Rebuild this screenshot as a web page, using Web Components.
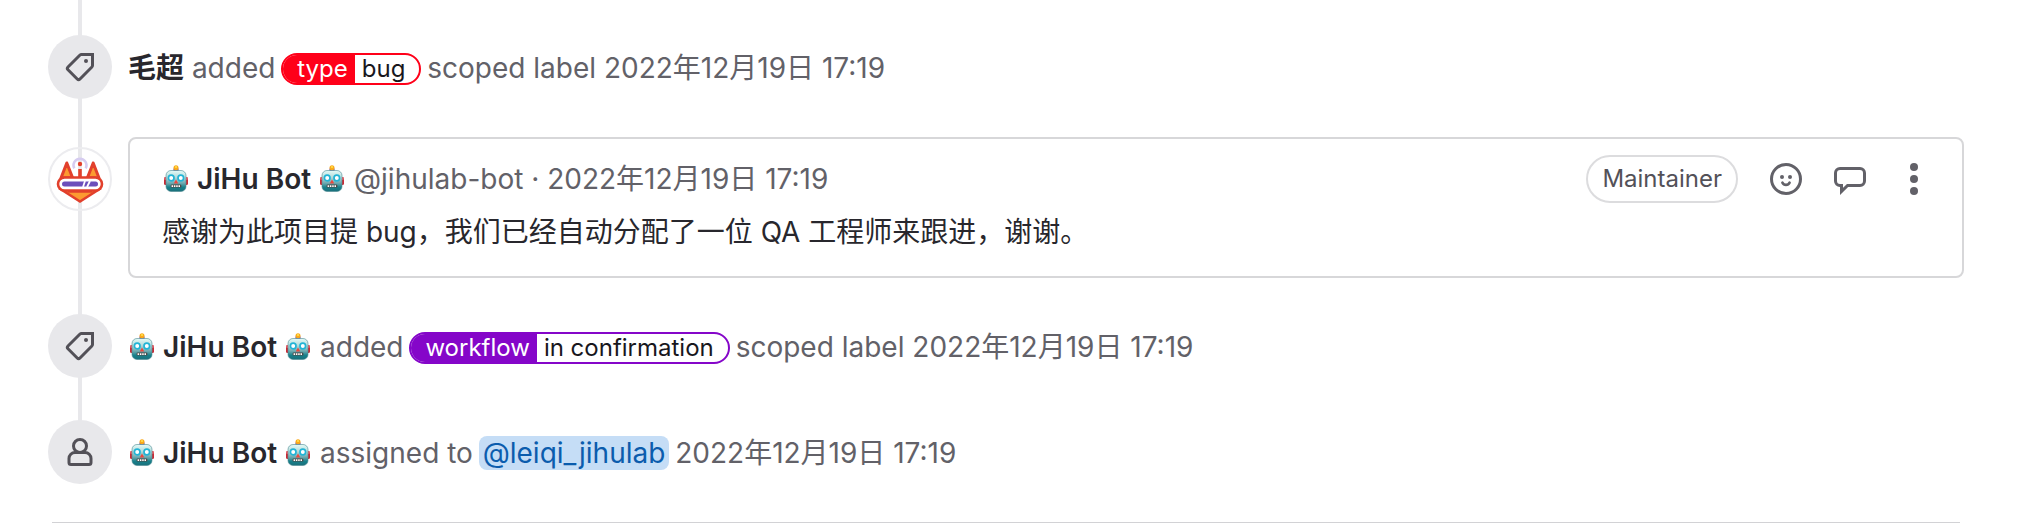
<!DOCTYPE html>
<html lang="en">
<head>
<meta charset="utf-8">
<title>Issue activity</title>
<style>
  body { margin: 0; background: #fff; color: #28272d; font: 28px/40px Inter, "Noto Sans CJK SC", sans-serif; }
</style>
</head>
<body>
<activity-timeline>
  <timeline-entry icon="label">
    <user-name>毛超</user-name> added <scoped-label scope="type" color="#ff0019">bug</scoped-label> scoped label <time-stamp></time-stamp>
  </timeline-entry>
  <timeline-note></timeline-note>
  <timeline-entry icon="label">
    <user-name bot>JiHu Bot</user-name> added <scoped-label scope="workflow" color="#8506c9">in confirmation</scoped-label> scoped label <time-stamp></time-stamp>
  </timeline-entry>
  <timeline-entry icon="user">
    <user-name bot>JiHu Bot</user-name> assigned to <user-mention>@leiqi_jihulab</user-mention> <time-stamp></time-stamp>
  </timeline-entry>
</activity-timeline>
<script>
const define = (name, html, setup) => customElements.define(name, class extends HTMLElement {
  connectedCallback() {
    if (this.shadowRoot) return;
    const root = this.attachShadow({ mode: 'open' });
    root.innerHTML = html;
    if (setup) setup(this, root);
  }
});

define('robot-emoji', `
<style>:host{display:inline-block;width:28px;height:28px;vertical-align:-4px} svg{display:block}</style>
<svg width="28" height="28" viewBox="0 0 28 28" role="img" aria-label="robot">
  <defs>
    <linearGradient id="face" x1="0" y1="0" x2="0" y2="1"><stop offset="0" stop-color="#e4fbf8"/><stop offset=".3" stop-color="#b9dedd"/><stop offset=".6" stop-color="#6fa9af"/><stop offset=".8" stop-color="#17808a"/><stop offset="1" stop-color="#1b6f7a"/></linearGradient>
  </defs>
  <rect x="2" y="12" width="24" height="8" rx="1.5" fill="#c92a35"/>
  <rect x="2" y="12" width="24" height="3" rx="1.5" fill="#e9616a"/>
  <rect x="11.5" y="3" width="5" height="4.5" rx="1" fill="#6b3f88"/>
  <circle cx="14" cy="2.8" r="2.5" fill="#f9a91c"/><circle cx="14" cy="2" r="1.1" fill="#ffe04a"/>
  <rect x="4" y="5.5" width="20" height="21" rx="5" fill="url(#face)" stroke="#4d8a92" stroke-width=".6"/>
  <g fill="#fff" stroke="#22b4d6" stroke-width="1.7"><circle cx="9.2" cy="13" r="2.8"/><circle cx="18.8" cy="13" r="2.8"/></g>
  <path d="M14 14.5l2.2 4h-4.4z" fill="#f0453a"/>
  <rect x="8.6" y="19.6" width="10.8" height="3" rx="1.2" fill="#4f4a48"/>
  <path d="M9.6 21.1h9" stroke="#fff" stroke-width="1.7" stroke-dasharray="1.5 .8"/>
</svg>`);

define('user-name', `
<style>:host{color:#28272d;font-weight:600} a{color:inherit;text-decoration:none}</style>
<a href="#"><slot></slot></a>`, (el, root) => {
  if (el.hasAttribute('bot')) {
    const a = root.querySelector('a');
    a.prepend(document.createElement('robot-emoji'), ' ');
    a.append(' ', document.createElement('robot-emoji'));
  }
});

define('time-stamp', `
<style>a{color:inherit;text-decoration:none}</style>
<a href="#"><time datetime="2022-12-19T17:19">2022年12月19日 17:19</time></a>`);

define('user-mention', `
<style>:host{margin:0 -2px} a{color:#0b5cad;background:#c5ddf6;border-radius:8px;padding:0 4px;text-decoration:none}</style>
<a href="#"><slot></slot></a>`);

define('scoped-label', `
<style>
:host{display:inline-flex;vertical-align:1px;margin:0 -2px}
a{display:flex;box-sizing:border-box;height:32px;border:2px solid var(--c);border-radius:16px;overflow:hidden;font-size:24px;line-height:28px;color:#18171d;text-decoration:none}
.scope{background:var(--c);color:#fff;padding:0 7px 0 14px}
.value{padding:0 14px 0 7px}
</style>
<a href="#"><span class="scope"></span><span class="value"><slot></slot></span></a>`, (el, root) => {
  root.querySelector('.scope').textContent = el.getAttribute('scope');
  el.style.setProperty('--c', el.getAttribute('color'));
});

const icons = {
  label: '<path d="M8.7 1.75h5.55V7.3a1 1 0 0 1-.3.7L8 14a1 1 0 0 1-1.4 0L2 9.4A1 1 0 0 1 2 8l6-6a1 1 0 0 1 .7-.25z"/><circle cx="11" cy="5" r="1" fill="currentColor" stroke="none"/>',
  user: '<circle cx="8" cy="5" r="3.25"/><path d="M5.5 8.25h5a3 3 0 0 1 3 3v2a1 1 0 0 1-1 1h-9a1 1 0 0 1-1-1v-2a3 3 0 0 1 3-3z"/>'
};

define('timeline-entry', `
<style>
:host{display:grid;grid-template-columns:64px 1fr;column-gap:16px;align-items:center;color:#626168}
.badge{display:grid;place-items:center;height:64px;border-radius:50%;background:#e8e8eb;color:#535158}
.text{padding-top:2px}
</style>
<div class="badge"><svg width="32" height="32" viewBox="0 0 16 16" fill="none" stroke="currentColor" stroke-width="1.5" aria-hidden="true"></svg></div>
<div class="text"><slot></slot></div>`, (el, root) => {
  root.querySelector('svg').innerHTML = icons[el.getAttribute('icon')];
});

define('bot-avatar', `
<style>:host{display:block;width:64px;height:64px} svg{display:block}</style>
<svg width="64" height="64" viewBox="0 0 64 64" role="img" aria-label="JiHu Bot avatar">
  <circle cx="32" cy="32" r="31" fill="#fff"/>
  <path d="M30 1h4v62h-4z" fill="#e8e8eb"/>
  <circle cx="32" cy="32" r="31" fill="none" stroke="#ececef" stroke-width="2"/>
  <path d="M26.3 21.3a6.5 6.5 0 1 1 11.4 0" fill="none" stroke="#d6ccf0" stroke-width="2.5"/>
  <path d="M13 31l5.8-15 5.7 14.5zM51 31l-5.8-15-5.7 14.5z" fill="#fc9a30" stroke="#e2402c" stroke-width="3" stroke-linejoin="round"/>
  <circle cx="32" cy="17" r="2.2" fill="#e2402c"/><path d="M30.2 22h3.6v8h-3.6z" fill="#e2402c"/>
  <path d="M14 43h36L32 54.5z" fill="#fc9a30" stroke="#e2402c" stroke-width="2.5"/>
  <path d="M20 44.5h24" stroke="#e2402c" stroke-width="2.5"/>
  <rect x="10" y="30.5" width="44" height="13" rx="6.5" fill="#fff" stroke="#e2402c" stroke-width="2.6"/>
  <rect x="14" y="34.5" width="36" height="5" rx="2.5" fill="#6b4fbb"/>
  <path d="M37 34l-2 6M42 34l-3 6" stroke="#fff" stroke-width="1.8"/>
</svg>`);

define('icon-button', `
<style>
:host{display:block}
button{display:grid;place-items:center;width:64px;height:48px;margin:0;padding:0;border:0;background:none;color:#626168}
</style>
<button type="button"><slot></slot></button>`, (el, root) => {
  root.querySelector('button').setAttribute('aria-label', el.getAttribute('label'));
});

define('timeline-note', `
<style>
:host{display:grid;grid-template-columns:64px 1fr;column-gap:16px;align-items:start}
bot-avatar{margin-top:10px}
article{box-sizing:border-box;border:2px solid #d7d7d9;border-radius:8px;padding:16px 16px 23px 32px}
header{display:flex;justify-content:space-between;align-items:center;height:48px;color:#626168}
header a{color:inherit;text-decoration:none}
.actions{display:flex;align-items:center}
.role{box-sizing:border-box;height:48px;border:2px solid #dcdcde;border-radius:24px;padding:0 14px;font-size:24px;line-height:44px;color:#535158;margin-right:16px}
p{margin:8px 0 0;line-height:42px}
</style>
<bot-avatar></bot-avatar>
<article>
  <header>
    <div><user-name bot>JiHu Bot</user-name> <a href="#">@jihulab-bot</a> · <time-stamp></time-stamp></div>
    <div class="actions">
      <span class="role">Maintainer</span>
      <icon-button label="Add reaction"><svg width="32" height="32" viewBox="0 0 16 16" fill="none" stroke="currentColor"><circle cx="8" cy="8" r="7.25" stroke-width="1.5"/><path d="M6.2 9.8a2 2 0 0 0 3.6 0" stroke-width="1.3" stroke-linecap="round"/><g fill="currentColor" stroke="none"><circle cx="6" cy="7" r="1"/><circle cx="10" cy="7" r="1"/></g></svg></icon-button>
      <icon-button label="Reply to comment"><svg width="32" height="32" viewBox="0 0 16 16" fill="none" stroke="currentColor" stroke-width="1.5"><path d="M3 2.75h10A2.25 2.25 0 0 1 15.25 5v4A2.25 2.25 0 0 1 13 11.25H6.8L3.75 14.2V11.25H3A2.25 2.25 0 0 1 .75 9V5A2.25 2.25 0 0 1 3 2.75z"/></svg></icon-button>
      <icon-button label="More actions"><svg width="32" height="32" viewBox="0 0 16 16" fill="currentColor"><circle cx="8" cy="2" r="2"/><circle cx="8" cy="8" r="2"/><circle cx="8" cy="14" r="2"/></svg></icon-button>
    </div>
  </header>
  <p>感谢为此项目提 bug，我们已经自动分配了一位 QA 工程师来跟进，谢谢。</p>
</article>`);

define('activity-timeline', `
<style>
:host{display:block;padding:0 68px 0 48px}
section{display:flex;flex-direction:column;gap:36px;padding:35px 0 38px;background:linear-gradient(#e8e8eb,#e8e8eb) 30px 0/4px 440px no-repeat}
slot{display:contents}
::slotted(timeline-note){margin-top:2px}
::slotted(timeline-entry:last-of-type){margin-top:6px}
hr{height:1px;margin:0 4px;border:0;background:#d2d2d5}
</style>
<section><slot></slot></section><hr>`);
</script>
</body>
</html>
